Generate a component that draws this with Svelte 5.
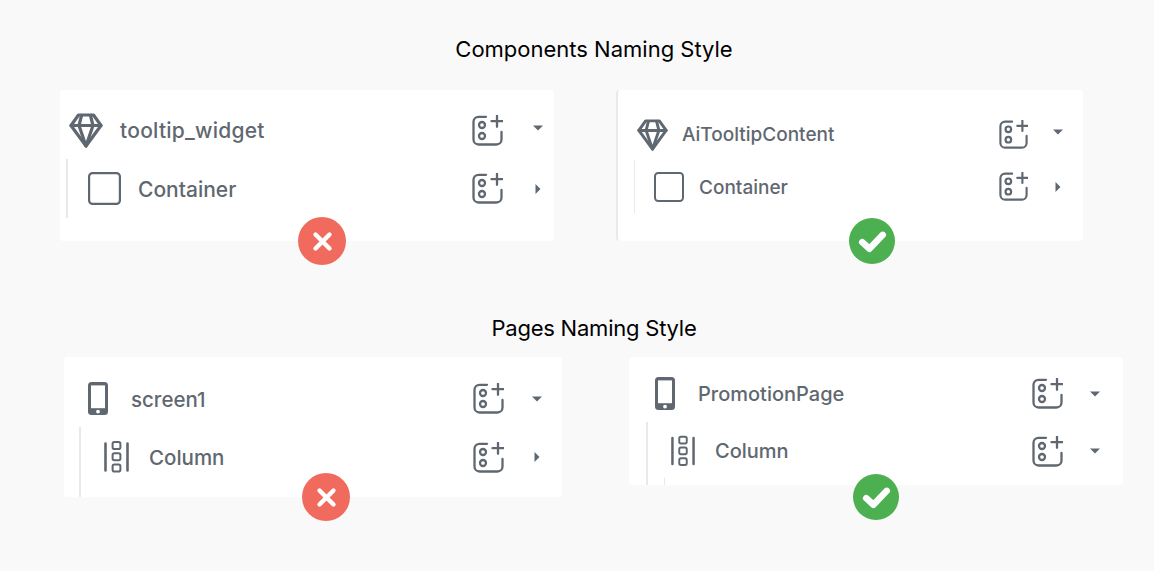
<script>
	const sections = [
		{
			title: 'Components Naming Style',
			cards: [
				{ cls: 'c1', top: 'tooltip_widget', topIcon: 'diamond', child: 'Container', childIcon: 'square', childCaret: 'right', ok: false },
				{ cls: 'c2', top: 'AiTooltipContent', topIcon: 'diamond', child: 'Container', childIcon: 'square', childCaret: 'right', ok: true }
			]
		},
		{
			title: 'Pages Naming Style',
			cards: [
				{ cls: 'c3', top: 'screen1', topIcon: 'phone', child: 'Column', childIcon: 'column', childCaret: 'right', ok: false },
				{ cls: 'c4', top: 'PromotionPage', topIcon: 'phone', child: 'Column', childIcon: 'column', childCaret: 'down', nested: true, ok: true }
			]
		}
	];
</script>

{#snippet icon(name)}
	{#if name === 'diamond'}
		<svg class="icon diamond" viewBox="0 0 34 35" fill="none" stroke="currentColor" stroke-width="3.2" stroke-linejoin="round" stroke-linecap="round">
			<path d="M9.5 2h15L32 12.5 17 33 2 12.5z" />
			<path d="M2 12.5h30M12.5 2.5 10 12.5 17 33l7-20.5L21.5 2.5" />
		</svg>
	{:else if name === 'square'}
		<svg class="icon square" viewBox="0 0 33 33" fill="none" stroke="currentColor" stroke-width="2.2">
			<rect x="1.1" y="1.1" width="30.8" height="30.8" rx="3.5" />
		</svg>
	{:else if name === 'phone'}
		<svg class="icon phone" viewBox="0 0 20 33">
			<rect width="20" height="33" rx="3.5" fill="currentColor" />
			<rect x="3" y="3.4" width="14" height="22.8" fill="#fff" />
			<circle cx="10" cy="29.6" r="1.9" fill="#fff" />
		</svg>
	{:else}
		<svg class="icon column" viewBox="0 0 25 32" fill="none" stroke="currentColor" stroke-width="2.6" stroke-linecap="round">
			<path d="M1.5 2.5v27M23.5 2.5v27" />
			<rect x="8.6" y="1.1" width="7.8" height="7" rx="1.8" stroke-width="2" />
			<rect x="8.6" y="12.3" width="7.8" height="7" rx="1.8" stroke-width="2" />
			<rect x="8.6" y="23.6" width="7.8" height="7" rx="1.8" stroke-width="2" />
		</svg>
	{/if}
{/snippet}

{#snippet add()}
	<svg class="add" viewBox="0 0 31 31" fill="none" stroke="currentColor" stroke-width="2.3" stroke-linecap="round">
		<path d="M14 1.8H6.5a5 5 0 0 0-5 5V24.5a5 5 0 0 0 5 5h18a5 5 0 0 0 5-5V17" />
		<circle cx="10" cy="10" r="3" />
		<circle cx="10" cy="21" r="3" />
		<path d="M25 0.8v11M19.5 6.2h11" />
	</svg>
{/snippet}

{#snippet caret(dir)}
	<svg class="caret {dir}" viewBox="0 0 10 10"><path d="M0 2.5h10L5 7.5z" fill="currentColor" /></svg>
{/snippet}

<main class="page">
	{#each sections as section}
		<section>
			<h2>{section.title}</h2>
			<div class="cards">
				{#each section.cards as card}
					<div class="card {card.cls}">
						<div class="row top">
							{@render icon(card.topIcon)}
							<span class="name">{card.top}</span>
							{@render add()}
							{@render caret('down')}
						</div>
						<div class="children">
							<div class="row">
								{@render icon(card.childIcon)}
								<span class="name">{card.child}</span>
								{@render add()}
								{@render caret(card.childCaret)}
							</div>
							{#if card.nested}<div class="nested"></div>{/if}
						</div>
						<span class="badge {card.ok ? 'ok' : 'bad'}">
							{#if card.ok}
								<svg viewBox="0 0 24 24" fill="none" stroke="#fff" stroke-width="5.4" stroke-linecap="round" stroke-linejoin="round"><path d="M3.5 12.5 9.5 18 20.5 6.5" /></svg>
							{:else}
								<svg viewBox="0 0 24 24" fill="none" stroke="#fff" stroke-width="5" stroke-linecap="round"><path d="M4 4l16 16M20 4 4 20" /></svg>
							{/if}
						</span>
					</div>
				{/each}
			</div>
		</section>
	{/each}
</main>

<style>
	:global(body) {
		background: #f9f9f9;
	}
	.page {
		width: 1154px;
		height: 571px;
		overflow: hidden;
		font-family: 'Inter', 'Liberation Sans', sans-serif;
		color: #5f6870;
	}
	h2 {
		margin: 0;
		padding-left: 34px;
		font-size: 22px;
		line-height: 30px;
		font-weight: 400;
		text-align: center;
		color: #000;
	}
	section:first-child h2 {
		padding-top: 34px;
		padding-bottom: 26px;
	}
	section:last-child {
		padding-top: 72px;
	}
	section:last-child h2 {
		padding-bottom: 14px;
		letter-spacing: -0.22px;
	}
	.cards {
		display: flex;
	}
	.card {
		position: relative;
		box-sizing: border-box;
		background: #fff;
		border-radius: 4px;
		flex: none;
	}
	.row {
		display: flex;
		align-items: center;
	}
	.name {
		font-weight: 500;
	}
	.add {
		display: block;
		margin-left: auto;
		flex: none;
	}
	.icon,
	.caret {
		display: block;
		flex: none;
	}
	.caret.right {
		transform: rotate(-90deg);
	}
	.children {
		position: relative;
		border-left: 2px solid #e6e9ee;
	}
	.nested {
		position: absolute;
		left: 16px;
		bottom: 0;
		height: 7px;
		border-left: 1px solid #e6e9ee;
	}
	.badge {
		position: absolute;
		display: flex;
		align-items: center;
		justify-content: center;
		border-radius: 50%;
	}
	.badge.bad {
		width: 48px;
		height: 48px;
		background: #f16a5e;
	}
	.badge.bad svg {
		width: 21px;
		height: 21px;
	}
	.badge.ok {
		width: 46px;
		height: 46px;
		background: #4caf50;
	}
	.badge.ok svg {
		width: 29px;
		height: 29px;
	}

	/* card 1 */
	.c1 {
		margin-left: 60px;
		width: 494px;
		height: 151px;
		padding: 23px 11px 0 6px;
	}
	.c1 .top {
		height: 35px;
		padding-left: 3px;
	}
	.c1 .diamond {
		width: 34px;
		height: 35px;
	}
	.c1 .name {
		font-size: 21px;
	}
	.c1 .top .name {
		margin-left: 17px;
		letter-spacing: 0.25px;
	}
	.c1 .add {
		width: 31px;
		height: 31px;
	}
	.c1 .caret {
		width: 10px;
		height: 10px;
		margin-left: 30px;
	}
	.c1 .top .caret {
		margin-bottom: 5px;
	}
	.c1 .children {
		margin-top: 11px;
		height: 59px;
	}
	.c1 .children .row {
		height: 59px;
		padding-left: 20px;
	}
	.c1 .square {
		width: 33px;
		height: 33px;
	}
	.c1 .children .name {
		margin-left: 17px;
		padding-top: 2px;
	}

	/* card 2 */
	.c2 {
		margin-left: 62px;
		width: 467px;
		height: 151px;
		padding: 29px 20px 0 16px;
		border-left: 2px solid #e6e9ee;
	}
	.c2 .top {
		height: 31px;
		padding-left: 3px;
	}
	.c2 .diamond {
		width: 31px;
		height: 32px;
	}
	.c2 .name {
		font-size: 19px;
	}
	.c2 .top .name {
		margin-left: 14px;
	}
	.c2 .add {
		width: 29px;
		height: 29px;
	}
	.c2 .caret {
		width: 10px;
		height: 10px;
		margin-left: 25px;
	}
	.c2 .top .caret {
		margin-bottom: 6px;
	}
	.c2 .children {
		margin-top: 10px;
		height: 53px;
		border-left-width: 1px;
	}
	.c2 .children .row {
		height: 53px;
		padding-left: 19px;
	}
	.c2 .square {
		width: 30px;
		height: 30px;
	}
	.c2 .children .name {
		margin-left: 15px;
		padding-top: 2px;
	}

	/* card 3 */
	.c3 {
		margin-left: 64px;
		width: 498px;
		height: 140px;
		padding: 25px 20px 0 15px;
	}
	.c3 .top {
		height: 33px;
		padding-left: 9px;
	}
	.c3 .phone {
		width: 20px;
		height: 33px;
	}
	.c3 .name {
		font-size: 20.5px;
	}
	.c3 .top .name {
		margin-left: 23px;
		padding-top: 2px;
	}
	.c3 .add {
		width: 31px;
		height: 31px;
	}
	.c3 .caret {
		width: 10px;
		height: 10px;
		margin-left: 28px;
	}
	.c3 .children {
		margin-top: 12px;
		height: 70px;
	}
	.c3 .children .row {
		height: 60px;
		padding-left: 23px;
	}
	.c3 .column {
		width: 25px;
		height: 32px;
	}
	.c3 .children .name {
		margin-left: 20px;
	}

	/* card 4 */
	.c4 {
		margin-left: 67px;
		width: 494px;
		height: 128px;
		padding: 20px 23px 0 17px;
	}
	.c4 .top {
		height: 33px;
		padding-left: 9px;
	}
	.c4 .phone {
		width: 20px;
		height: 33px;
	}
	.c4 .name {
		font-size: 20px;
	}
	.c4 .top .name {
		margin-left: 23px;
		padding-top: 1px;
	}
	.c4 .add {
		width: 31px;
		height: 31px;
	}
	.c4 .caret {
		width: 10px;
		height: 10px;
		margin-left: 27px;
	}
	.c4 .children {
		margin-top: 12px;
		height: 63px;
	}
	.c4 .children .row {
		height: 58px;
		padding-left: 23px;
	}
	.c4 .column {
		width: 24px;
		height: 32px;
	}
	.c4 .children .name {
		margin-left: 20px;
	}

	.c1 .badge {
		left: 238px;
		top: 127px;
	}
	.c2 .badge {
		left: 231px;
		top: 128px;
	}
	.c3 .badge {
		left: 238px;
		top: 116px;
	}
	.c4 .badge {
		left: 224px;
		top: 117px;
	}
</style>
